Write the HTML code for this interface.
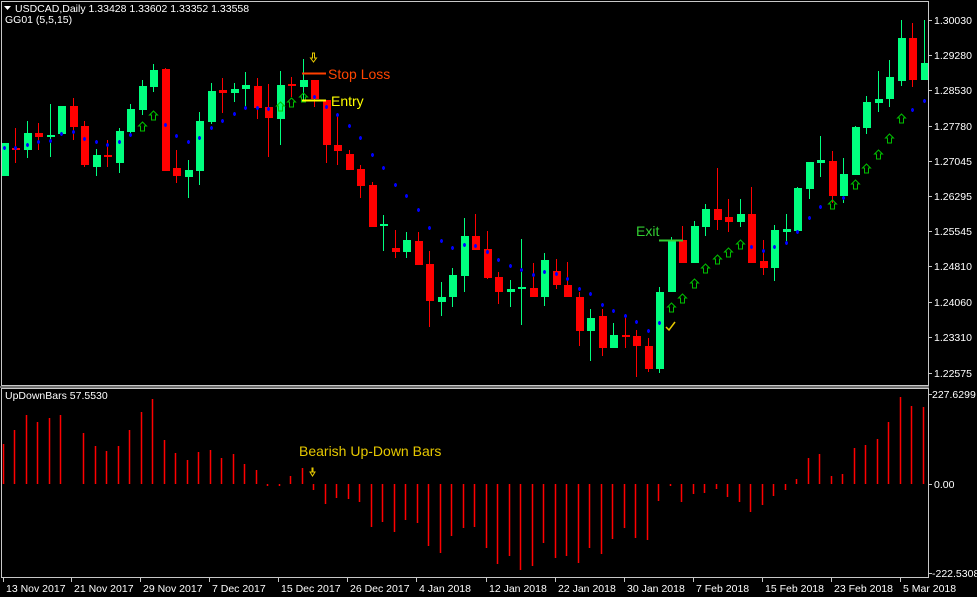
<!DOCTYPE html>
<html><head><meta charset="utf-8">
<style>
html,body{margin:0;padding:0;background:#000;width:977px;height:597px;overflow:hidden}
svg{display:block}
text{font-family:"Liberation Sans",sans-serif}
</style></head><body>
<svg id="s" width="977" height="597" xmlns="http://www.w3.org/2000/svg">
<rect width="977" height="597" fill="#000"/>
<g id="g"></g>
<rect x="1.5" y="1.5" width="927" height="384" fill="none" stroke="#c8c8c8" stroke-width="1"/>
<rect x="1.5" y="388.5" width="927" height="189" fill="none" stroke="#c8c8c8" stroke-width="1"/>
<line x1="0" y1="387" x2="929" y2="387" stroke="#e0e0e0"/>
<g fill="#fff" font-size="10.5">
<text x="15" y="12">USDCAD,Daily  1.33428 1.33602 1.33352 1.33558</text>
<text x="5" y="23">GG01 (5,5,15)</text>
<text x="5" y="399">UpDownBars 57.5530</text>
</g>
<path d="M4 6 L11 6 L7.5 10 Z" fill="#fff"/>
<g id="lab" fill="#fff" font-size="10.5"></g>
<line x1="302" y1="73.5" x2="326" y2="73.5" stroke="#ff4000" stroke-width="2"/>
<text x="328" y="79" fill="#ff4500" font-size="14">Stop Loss</text>
<line x1="302" y1="100.5" x2="326" y2="100.5" stroke="#ffff00" stroke-width="2"/>
<text x="331" y="106" fill="#ffff00" font-size="14">Entry</text>
<line x1="659" y1="240.5" x2="683" y2="240.5" stroke="#32cd32" stroke-width="2"/>
<text x="636" y="236" fill="#32cd32" font-size="14">Exit</text>
<text x="299" y="456" fill="#e6c800" font-size="14">Bearish Up-Down Bars</text>
<path d="M666 327 L669 330 L675 322" fill="none" stroke="#e6c800" stroke-width="1.5"/>
</svg>
<script>
var C=[
[143,176,143,176,1],[148,149,128,163,0],[133,150,121,158,1],[133,137,123,150,0],[135,137,104,157,1],
[106,134,106,134,1],[106,127,98,140,0],[126,165,121,167,0],[155,167,149,176,1],[155,157,140,167,0],
[131,163,128,173,1],[109,132,104,133,1],[86,110,80,115,1],[70,87,64,92,1],[69,171,68,171,0],
[168,176,150,183,0],[170,177,160,198,1],[121,171,112,185,1],[91,122,83,124,1],[90,93,78,113,0],
[89,93,83,102,1],[85,89,72,108,1],[86,108,78,119,0],[107,118,84,157,0],[85,119,71,145,1],
[84,86,77,97,0],[80,87,59,100,1],[80,99,80,107,0],[100,145,100,163,0],[145,151,116,165,0],
[154,170,150,170,0],[169,186,165,198,0],[185,227,182,227,0],[224,226,215,251,1],[248,252,230,258,0],
[240,252,232,258,1],[241,265,232,265,0],[264,301,251,327,0],[297,302,282,316,1],[275,297,268,307,1],
[236,276,218,292,1],[236,250,214,250,0],[249,278,231,279,0],[277,292,272,304,0],[289,292,280,307,1],
[287,289,239,325,1],[288,297,263,297,0],[260,297,253,306,1],[271,285,259,289,0],[285,297,262,297,0],
[297,331,292,346,0],[318,331,309,361,1],[316,348,309,356,0],[335,348,323,348,1],[335,337,318,348,0],
[336,346,330,377,0],[346,369,338,372,0],[292,369,287,373,1],[240,292,237,292,1],[240,263,226,263,0],
[226,263,221,263,1],[209,227,204,236,1],[209,220,168,230,0],[217,222,199,232,0],[214,222,199,227,1],
[214,263,187,263,0],[261,268,240,275,0],[230,268,225,281,1],[229,232,214,245,1],[188,231,187,231,1],
[162,189,162,199,1],[160,163,136,177,1],[161,196,151,203,0],[174,196,158,203,1],[127,175,126,175,1],
[102,128,96,134,1],[99,103,71,112,1],[77,99,60,107,1],[38,81,20,86,1],[38,80,23,87,0],[63,80,20,80,1]];
var H=[40,54,69,62,66,69,0,51,38,33,38,54,72,85,44,31,24,32,34,26,30,20,14,-2,-1,8,16,-6,-20,-14,-15,-18,-43,-38,-48,-36,-39,-62,-69,-52,-44,-43,-64,
-64,-80,-72,-86,-82,-59,-74,-72,-79,-64,-70,-55,-44,-54,-56,-17,-1,-18,-10,-9,-5,-13,-18,-28,-21,-12,-6,5,26,30,8,10,36,39,45,62,87,78,77];
H.splice(42,1);
var D={0:148,1:148,2:145,3:142,4:141,5:134,6:132,7:139,8:142,9:145,10:142,11:135,14:125,15:136,16:142,17:138,18:128,19:121,20:114,21:108,22:108,23:109,27:97,28:107,29:115,30:126,31:138,32:155,33:168,34:185,35:196,36:210,37:228,38:241,39:248,40:245,41:246,42:252,43:260,44:266,45:270,46:275,47:272,48:274,49:279,50:289,51:294,52:305,53:311,54:316,55:322,56:331,57:323,65:247,66:251,67:247,68:243,69:232,70:218,71:207,73:198,79:110,80:101};
var A={12:126,13:115,24:106,25:102,26:97,58:307,59:298,60:283,61:268,62:259,63:252,64:244,72:204,74:184,75:168,76:154,77:138,78:118};
var s='';
function X(i){return 3.5+i*11.5;}
for(var i=0;i<C.length;i++){var c=C[i],x=Math.round(X(i)),col=c[4]?'#00ff7f':'#ff0000';
s+='<line x1="'+(x+0.5)+'" y1="'+c[2]+'" x2="'+(x+0.5)+'" y2="'+c[3]+'" stroke="'+col+'"/>';
var h=Math.max(c[1]-c[0],2);s+='<rect x="'+(x-3)+'" y="'+c[0]+'" width="8" height="'+h+'" fill="'+col+'"/>';}
for(var k in D){var x=Math.round(X(+k))+0.5,y=D[k];s+='<path d="M'+(x-1.5)+' '+y+'h3M'+x+' '+(y-2)+'v4" stroke="#0000ff" stroke-width="1.8"/>';}
for(var k in A){var x=Math.round(X(+k))+0.5,y=A[k]-4;s+='<path d="M'+x+' '+y+'l4 4h-2v5h-4v-5h-2z" fill="none" stroke="#00c000"/>';}
s+='<path d="M312.5 53v5h-2l3 4 3-4h-2v-5z" fill="none" stroke="#e6c800"/>';
s+='<path d="M312 468v4h-2l2.5 4 2.5-4h-2v-4z" fill="none" stroke="#e6c800"/>';
for(var i=0;i<H.length;i++){var x=Math.round(X(i)-1)+0.5,h=H[i];if(h==0)continue;if(Math.abs(h)<2)h=h<0?-2:2;
s+='<line x1="'+x+'" y1="484" x2="'+x+'" y2="'+(484-h)+'" stroke="#ff0000" stroke-width="1.5"/>';}
var P=[["1.30030",20],["1.29280",55],["1.28530",90],["1.27780",126],["1.27045",161],["1.26295",196],["1.25545",231],["1.24810",266],["1.24060",302],["1.23310",337],["1.22575",373]];
P.forEach(function(p){s+='<line x1="929" y1="'+(p[1]+0.5)+'" x2="932" y2="'+(p[1]+0.5)+'" stroke="#c8c8c8"/>';});
[394,484,573].forEach(function(y){s+='<line x1="929" y1="'+(y+0.5)+'" x2="932" y2="'+(y+0.5)+'" stroke="#c8c8c8"/>';});
var T=[3,71,140,209,278,347,416,486,555,624,693,762,831,900];
T.forEach(function(x){s+='<line x1="'+(x+0.5)+'" y1="578" x2="'+(x+0.5)+'" y2="582" stroke="#c8c8c8"/>';});
document.getElementById('g').innerHTML=s;
var L='';
P.forEach(function(p){L+='<text x="934" y="'+(p[1]+4)+'">'+p[0]+'</text>';});
L+='<text x="932" y="398">227.6299</text><text x="934" y="488">0.00</text><text x="932" y="577">-222.5308</text>';
var N=["13 Nov 2017","21 Nov 2017","29 Nov 2017","7 Dec 2017","15 Dec 2017","26 Dec 2017","4 Jan 2018","12 Jan 2018","22 Jan 2018","30 Jan 2018","7 Feb 2018","15 Feb 2018","23 Feb 2018","5 Mar 2018"];
N.forEach(function(n,i){L+='<text x="'+(T[i]+3)+'" y="592">'+n+'</text>';});
document.getElementById('lab').innerHTML=L;
</script>
</body></html>
